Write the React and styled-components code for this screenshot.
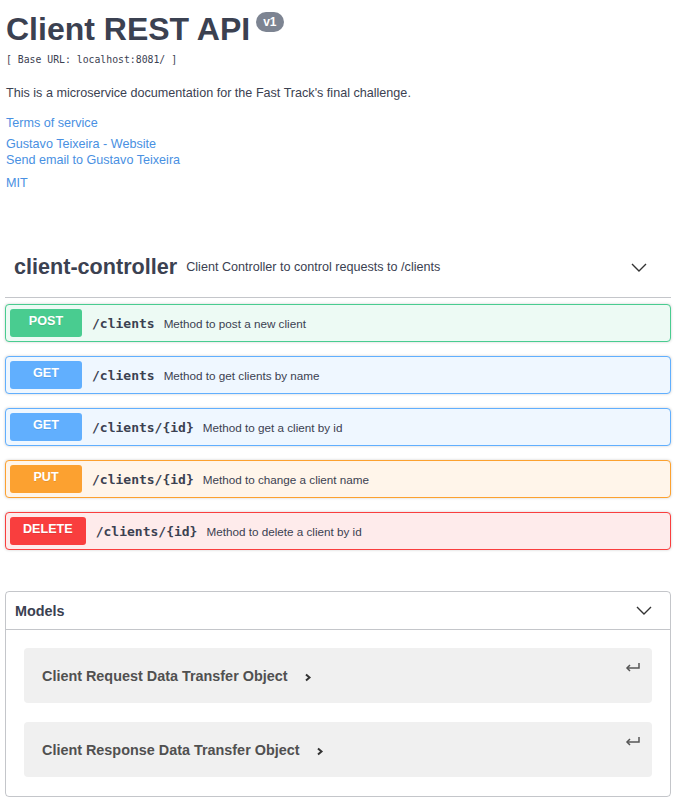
import React from 'react'
import styled, { createGlobalStyle } from 'styled-components'

const GlobalStyle = createGlobalStyle`
  body {
    margin: 0;
    background: #fff;
    font-family: "Liberation Sans", Arial, sans-serif;
    color: #3b4151;
  }
`

const methodColors = {
  POST: { main: '#49cc90', bg: '#edfaf4' },
  GET: { main: '#61affe', bg: '#eff7ff' },
  PUT: { main: '#fca130', bg: '#fff5ea' },
  DELETE: { main: '#f93e3e', bg: '#feebeb' },
}

const Page = styled.div`
  padding: 11px 10px 10px 5px;
`

const Info = styled.div`
  padding-left: 1px;
`

const TitleRow = styled.div`
  display: flex;
  align-items: flex-start;
`

const Title = styled.h2`
  margin: 0;
  font-size: 32px;
  line-height: 36px;
  font-weight: 700;
  color: #3b4151;
`

const Version = styled.span`
  margin: 1px 0 0 6px;
  height: 20px;
  padding: 0 7px;
  border-radius: 10px;
  background: #7d8492;
  color: #fff;
  font-size: 12px;
  font-weight: 700;
  line-height: 20px;
`

const BaseUrl = styled.div`
  margin-top: 6px;
  font-family: "DejaVu Sans Mono", monospace;
  font-size: 9.8px;
  line-height: 14px;
  color: #3b4151;
`

const Description = styled.p`
  margin: 18px 0 0;
  font-size: 12.6px;
  line-height: 16px;
`

const Link = styled.a`
  display: block;
  margin-top: ${p => p.gap}px;
  font-size: 12.6px;
  line-height: 16px;
  color: #4990e2;
  text-decoration: none;
`

const TagHeader = styled.div`
  margin-top: 46px;
  display: flex;
  align-items: center;
  height: 60px;
  padding: 0 24px 0 9px;
  border-bottom: 1px solid rgba(59, 65, 81, 0.3);
`

const TagName = styled.h3`
  margin: 0;
  font-size: 21.6px;
  font-weight: 700;
  color: #3b4151;
`

const TagDescription = styled.span`
  margin-left: 9px;
  font-size: 12.6px;
  flex: 1;
`

const OpList = styled.div`
  margin-top: 6px;
  display: flex;
  flex-direction: column;
  gap: 14px;
`

const OpBlock = styled.div`
  display: flex;
  align-items: center;
  height: 36px;
  padding: 0 4px;
  border: 1px solid ${p => methodColors[p.method].main};
  background: ${p => methodColors[p.method].bg};
  border-radius: 4px;
  box-shadow: 0 0 3px rgba(0, 0, 0, 0.19);
`

const Method = styled.span`
  min-width: 72px;
  box-sizing: border-box;
  height: 28px;
  padding: 0 13px 3px;
  border-radius: 3px;
  background: ${p => methodColors[p.method].main};
  color: #fff;
  font-size: 12.6px;
  font-weight: 700;
  line-height: 25px;
  text-align: center;
  text-shadow: 0 1px 0 rgba(0, 0, 0, 0.1);
`

const Path = styled.span`
  padding: 0 9px 0 10px;
  font-family: "DejaVu Sans Mono", monospace;
  font-size: 13px;
  font-weight: 700;
  color: #3b4151;
`

const OpSummary = styled.span`
  font-size: 11.7px;
  color: #3b4151;
`

const Models = styled.section`
  margin-top: 41px;
  border: 1px solid rgba(59, 65, 81, 0.3);
  border-radius: 4px;
`

const ModelsHeader = styled.h4`
  margin: 0;
  display: flex;
  align-items: center;
  justify-content: space-between;
  height: 37px;
  padding: 0 18px 0 9px;
  border-bottom: 1px solid rgba(59, 65, 81, 0.3);
  font-size: 14.4px;
  font-weight: 700;
  color: #3b4151;
`

const ModelList = styled.div`
  display: flex;
  flex-direction: column;
  gap: 19px;
  padding: 18px 18px 19px;
`

const ModelItem = styled.div`
  display: flex;
  align-items: center;
  height: 55px;
  padding: 0 11px 0 18px;
  border-radius: 4px;
  background: #f0f0f0;
`

const ModelTitle = styled.span`
  font-size: 14.4px;
  font-weight: 700;
  color: #505050;
`

const ModelToggle = styled.svg`
  margin: 3px 0 0 16px;
`

const ReturnIcon = styled.svg`
  margin-left: auto;
  align-self: flex-start;
  margin-top: 14px;
`

const ChevronDown = () => (
  <svg width="16" height="9" viewBox="0 0 16 9">
    <polyline points="1,1 8,8 15,1" fill="none" stroke="#333" strokeWidth="1.4" />
  </svg>
)

const operations = [
  { method: 'POST', path: '/clients', summary: 'Method to post a new client' },
  { method: 'GET', path: '/clients', summary: 'Method to get clients by name' },
  { method: 'GET', path: '/clients/{id}', summary: 'Method to get a client by id' },
  { method: 'PUT', path: '/clients/{id}', summary: 'Method to change a client name' },
  { method: 'DELETE', path: '/clients/{id}', summary: 'Method to delete a client by id' },
]

const models = ['Client Request Data Transfer Object', 'Client Response Data Transfer Object']

export default function App() {
  return (
    <>
      <GlobalStyle />
      <Page>
        <Info>
          <TitleRow>
            <Title>Client REST API</Title>
            <Version>v1</Version>
          </TitleRow>
          <BaseUrl>[ Base URL: localhost:8081/ ]</BaseUrl>
          <Description>This is a microservice documentation for the Fast Track's final challenge.</Description>
          <Link gap={14} href="#">Terms of service</Link>
          <Link gap={5} href="#">Gustavo Teixeira - Website</Link>
          <Link gap={0} href="#">Send email to Gustavo Teixeira</Link>
          <Link gap={7} href="#">MIT</Link>
        </Info>

        <TagHeader>
          <TagName>client-controller</TagName>
          <TagDescription>Client Controller to control requests to /clients</TagDescription>
          <ChevronDown />
        </TagHeader>

        <OpList>
          {operations.map((op, i) => (
            <OpBlock key={i} method={op.method}>
              <Method method={op.method}>{op.method}</Method>
              <Path>{op.path}</Path>
              <OpSummary>{op.summary}</OpSummary>
            </OpBlock>
          ))}
        </OpList>

        <Models>
          <ModelsHeader>
            Models
            <ChevronDown />
          </ModelsHeader>
          <ModelList>
            {models.map(name => (
              <ModelItem key={name}>
                <ModelTitle>{name}</ModelTitle>
                <ModelToggle width="8" height="9" viewBox="0 0 8 9">
                  <polyline points="2,1.5 5.5,4.5 2,7.5" fill="none" stroke="#333" strokeWidth="2" />
                </ModelToggle>
                <ReturnIcon width="16" height="10" viewBox="0 0 16 10">
                  <path d="M14 1 V6 H2" fill="none" stroke="#555" strokeWidth="1.5" />
                  <polyline points="5,3 2,6 5,9" fill="none" stroke="#555" strokeWidth="1.5" />
                </ReturnIcon>
              </ModelItem>
            ))}
          </ModelList>
        </Models>
      </Page>
    </>
  )
}
